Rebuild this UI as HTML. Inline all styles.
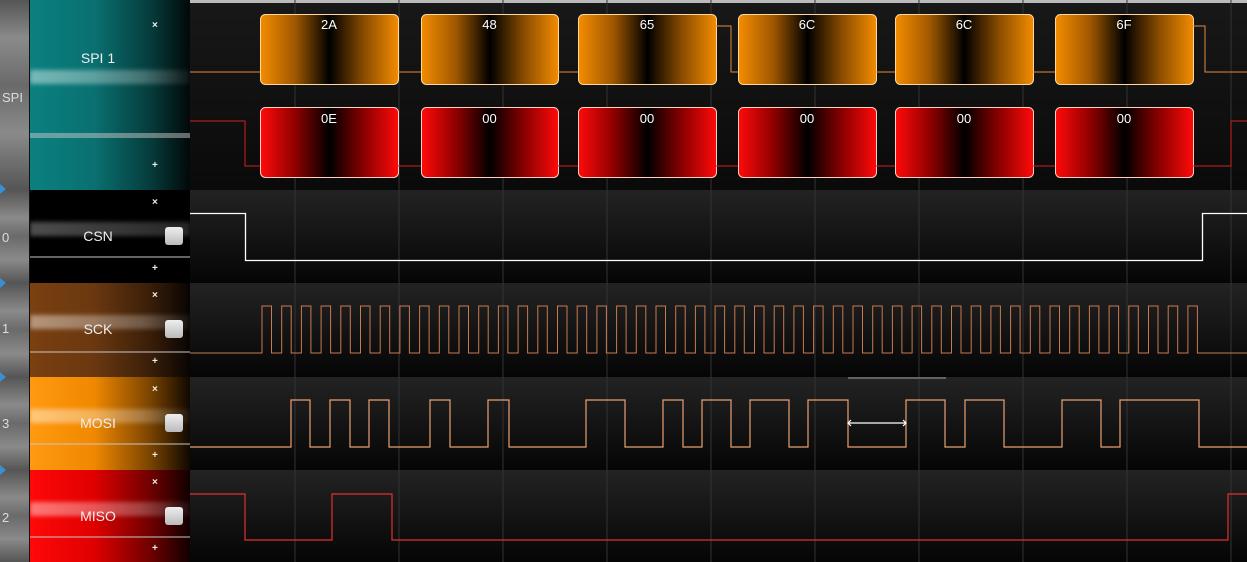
<!DOCTYPE html>
<html><head><meta charset="utf-8"><style>
body{margin:0;width:1247px;height:562px;overflow:hidden;background:#111;font-family:"Liberation Sans",sans-serif;position:relative}
.g{position:absolute;left:0;width:29px;background:linear-gradient(180deg,#555 0%,#8a8a8a 30%,#6a6a6a 50%,#8a8a8a 75%,#555 100%);color:#ddd;font-size:13px}
.g span{position:absolute;left:2px}
.lab{position:absolute;left:30px;width:160px;color:#eee;font-size:14px;text-align:center;overflow:hidden}
.lab .n{position:absolute;left:0;right:24px}
.lab .x,.lab .p{position:absolute;left:122px;font-size:10px;color:#eee;font-weight:bold}
.cb{position:absolute;left:135px;width:18px;height:18px;border-radius:3px;background:linear-gradient(#eee,#bbb);}
.streak{position:absolute;left:0;right:0;height:10px;background:linear-gradient(90deg,rgba(255,255,255,.45),rgba(255,255,255,.25) 70%,rgba(255,255,255,.05));filter:blur(2px)}
.line{position:absolute;left:0;right:0;height:2px;background:rgba(200,200,200,.5)}
.tri{position:absolute;left:0;width:0;height:0;border-top:5px solid transparent;border-bottom:5px solid transparent;border-left:6px solid #3a8fd0}
</style></head><body>
<div class="g" style="top:0;height:190px;background:linear-gradient(180deg,#555,#8a8a8a 20%,#6a6a6a 45%,#8a8a8a 70%,#555)"><span style="top:90px">SPI</span></div>
<div class="g" style="top:190px;height:93px"><span style="top:40px">0</span></div>
<div class="g" style="top:283px;height:94px"><span style="top:38px">1</span></div>
<div class="g" style="top:377px;height:93px"><span style="top:39px">3</span></div>
<div class="g" style="top:470px;height:92px"><span style="top:40px">2</span></div>
<div class="tri" style="top:184px"></div><div class="tri" style="top:278px"></div><div class="tri" style="top:372px"></div><div class="tri" style="top:465px"></div>

<div class="lab" style="top:0;height:190px;background:linear-gradient(90deg,#0b8080,#0a7070 40%,#063c3c 75%,#020808)">
<div class="streak" style="top:70px;height:14px"></div><div class="streak" style="top:133px;height:5px;filter:none;background:rgba(200,200,200,.5)"></div>
<div class="n" style="top:50px">SPI 1</div><div class="x" style="top:20px">×</div><div class="p" style="top:160px">+</div></div>

<div class="lab" style="top:190px;height:93px;background:#000">
<div class="streak" style="top:32px;height:14px;background:linear-gradient(90deg,rgba(255,255,255,.3),rgba(255,255,255,.15));"></div><div class="line" style="top:66px"></div>
<div class="n" style="top:38px">CSN</div><div class="cb" style="top:37px"></div><div class="x" style="top:7px">×</div><div class="p" style="top:73px">+</div></div>

<div class="lab" style="top:283px;height:94px;background:linear-gradient(90deg,#7a4010,#6a3810 40%,#3a1e08 75%,#080402)">
<div class="streak" style="top:32px;height:14px"></div><div class="line" style="top:68px"></div>
<div class="n" style="top:38px">SCK</div><div class="cb" style="top:37px"></div><div class="x" style="top:7px">×</div><div class="p" style="top:73px">+</div></div>

<div class="lab" style="top:377px;height:93px;background:linear-gradient(90deg,#ff9a10,#f08800 40%,#7a4400 75%,#100800)">
<div class="streak" style="top:32px;height:14px"></div><div class="line" style="top:66px"></div>
<div class="n" style="top:38px">MOSI</div><div class="cb" style="top:37px"></div><div class="x" style="top:7px">×</div><div class="p" style="top:73px">+</div></div>

<div class="lab" style="top:470px;height:92px;background:linear-gradient(90deg,#ff0808,#e00000 40%,#700000 75%,#100000)">
<div class="streak" style="top:32px;height:14px"></div><div class="line" style="top:66px"></div>
<div class="n" style="top:38px">MISO</div><div class="cb" style="top:37px"></div><div class="x" style="top:7px">×</div><div class="p" style="top:73px">+</div></div>

<svg id="s" style="position:absolute;left:0;top:0" width="1247" height="562" font-family="Liberation Sans" font-size="13">
<defs>
<linearGradient id="bgA" x1="0" y1="0" x2="0" y2="1"><stop offset="0" stop-color="#232323"/><stop offset="1" stop-color="#050505"/></linearGradient>
<linearGradient id="bgS" x1="0" y1="0" x2="0" y2="1"><stop offset="0" stop-color="#181818"/><stop offset="1" stop-color="#0a0a0a"/></linearGradient>
<linearGradient id="or" x1="0" y1="0" x2="1" y2="0"><stop offset="0" stop-color="#f38c00"/><stop offset=".25" stop-color="#a05800"/><stop offset=".5" stop-color="#000"/><stop offset=".75" stop-color="#8a4c00"/><stop offset="1" stop-color="#f38c00"/></linearGradient>
<linearGradient id="rd" x1="0" y1="0" x2="1" y2="0"><stop offset="0" stop-color="#ff0a0a"/><stop offset=".25" stop-color="#900000"/><stop offset=".5" stop-color="#000"/><stop offset=".75" stop-color="#8a0000"/><stop offset="1" stop-color="#ff0a0a"/></linearGradient>
</defs>
<rect x="190" y="0" width="1057" height="190" fill="url(#bgS)"/>
<rect x="190" y="190" width="1057" height="93" fill="url(#bgA)"/>
<rect x="190" y="283" width="1057" height="94" fill="url(#bgA)"/>
<rect x="190" y="377" width="1057" height="93" fill="url(#bgA)"/>
<rect x="190" y="470" width="1057" height="92" fill="url(#bgA)"/>
<rect x="190" y="0" width="1057" height="3" fill="#bbb"/>
<g id="grid" stroke="#333" stroke-width="1"></g>
<g id="boxes"></g>
<path d="M190 72H260M398 72H421M558 72H578M716 26H731V72H738M876 72H895M1033 72H1055M1193 26H1205V72H1247" stroke="#e08a40" fill="none"/>
<path d="M190 121H245V166H260M398 166H421M558 166H578M716 166H738M876 166H895M1033 166H1055M1193 166H1231V121H1247" stroke="#d02020" fill="none"/>
<path d="M190 213.5H245.5V260.5H1202.5V213.5H1247" stroke="#fff" fill="none" stroke-width="1.3"/>
<path id="sck" stroke="#c87a50" fill="none"/>
<path d="M190 447H291V400H310V447H330V400H350V447H369V400H389V447H430V400H450V447H488V400H509V447H586V400H625V447H663V400H683V447H702V400H731V447H750V400H789V447H808V400H848V447H906V400H945V447H965V400H1004V447H1062V400H1101V447H1120V400H1199V447H1247" stroke="#e8a070" fill="none" stroke-width="1.2"/>
<path d="M190 494H245V540H332V494H392V540H1228V494H1247" stroke="#e03030" fill="none" stroke-width="1.2"/>
<path d="M848 378H946" stroke="#777" stroke-width="1.5"/>
<path d="M848 423H906M851 420L848 423L851 426M903 420L906 423L903 426" stroke="#fff" fill="none" stroke-width="1.2"/>
</svg>
<script>
var s='M190 353H262';for(var k=0;k<48;k++){var x=262+k*19.7;s+='V306H'+(x+9.5).toFixed(1)+'V353H'+(k<47?(x+19.7).toFixed(1):'1247');}
document.getElementById('sck').setAttribute('d',s);
var g='';for(var i=0;i<10;i++){var x=295+i*104;g+='<line x1="'+x+'" y1="0" x2="'+x+'" y2="562"/>';}
document.getElementById('grid').innerHTML=g;
var xs=[[260,398],[421,558],[578,716],[738,876],[895,1033],[1055,1193]],t1=['2A','48','65','6C','6C','6F'],t2=['0E','00','00','00','00','00'],b='';
xs.forEach(function(p,i){var w=p[1]-p[0],c=(p[0]+p[1])/2;
b+='<rect x="'+p[0]+'.5" y="14.5" width="'+w+'" height="70" rx="5" fill="url(#or)" stroke="#ffd8a0"/><text x="'+c+'" y="29" fill="#fff" text-anchor="middle">'+t1[i]+'</text>';
b+='<rect x="'+p[0]+'.5" y="107.5" width="'+w+'" height="70" rx="5" fill="url(#rd)" stroke="#ffd0c0"/><text x="'+c+'" y="123" fill="#fff" text-anchor="middle">'+t2[i]+'</text>';});
document.getElementById('boxes').innerHTML=b;
</script>
</body></html>
